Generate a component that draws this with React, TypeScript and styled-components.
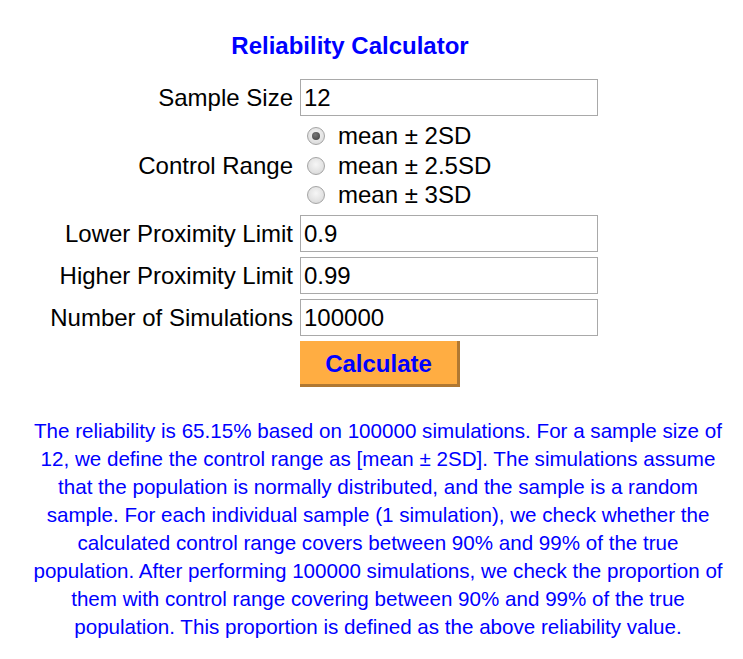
import React from "react";
import styled, { createGlobalStyle } from "styled-components";

const GlobalStyle = createGlobalStyle`
  body {
    margin: 0;
    background: #ffffff;
    font-family: "Liberation Sans", Arial, sans-serif;
    color: #000000;
  }
`;

const Page = styled.div`
  width: 743px;
  padding-top: 32px;
`;

const Title = styled.h1`
  width: 700px;
  margin: 0 0 19px 0;
  font-size: 24px;
  line-height: 28px;
  font-weight: bold;
  color: #0000ff;
  text-align: center;
`;

const Form = styled.div`
  display: grid;
  grid-template-columns: 293px 298px;
  column-gap: 7px;
  row-gap: 5px;
  align-items: center;
`;

const Label = styled.div`
  font-size: 24px;
  text-align: right;
  white-space: nowrap;
`;

const TextInput = styled.input`
  box-sizing: border-box;
  width: 298px;
  height: 37px;
  margin: 0;
  padding: 0 3px;
  border: 1px solid #a9a9a9;
  font-family: "Liberation Sans", Arial, sans-serif;
  font-size: 24px;
  color: #000000;
  outline: none;
`;

const RadioGroup = styled.div`
  display: flex;
  flex-direction: column;
`;

const RadioOption = styled.label`
  display: flex;
  align-items: center;
  height: 29.7px;
  padding-left: 7px;
  gap: 13px;
  font-size: 24px;
  white-space: nowrap;
`;

const Radio = styled.input`
  appearance: none;
  box-sizing: border-box;
  width: 18px;
  height: 18px;
  margin: 0;
  border-radius: 50%;
  border: 1px solid #a4a4a4;
  background: radial-gradient(circle at 50% 40%, #f6f6f6 0%, #e2e2e2 60%, #d0d0d0 100%);
  display: grid;
  place-items: center;

  &:checked::after {
    content: "";
    width: 8px;
    height: 8px;
    border-radius: 50%;
    background: radial-gradient(circle at 40% 35%, #777 0%, #3c3c3c 100%);
  }
`;

const Spacer = styled.div``;

const CalcButton = styled.button`
  box-sizing: border-box;
  width: 160px;
  height: 46px;
  margin: 0;
  padding: 2px 0 0 0;
  border: none;
  border-right: 3px solid #b07832;
  border-bottom: 3px solid #b07832;
  background: #ffad42;
  color: #0000ff;
  font-family: "Liberation Sans", Arial, sans-serif;
  font-size: 24px;
  font-weight: bold;
  cursor: pointer;
`;

const Result = styled.p`
  width: 700px;
  margin: 30px 0 0 28px;
  font-size: 20.6px;
  line-height: 28px;
  color: #0000ff;
  text-align: center;
`;

const ranges = ["mean ± 2SD", "mean ± 2.5SD", "mean ± 3SD"];

export default function App() {
  return (
    <Page>
      <GlobalStyle />
      <Title>Reliability Calculator</Title>
      <Form>
        <Label>Sample Size</Label>
        <TextInput defaultValue="12" />

        <Label>Control Range</Label>
        <RadioGroup>
          {ranges.map((r, i) => (
            <RadioOption key={r}>
              <Radio type="radio" name="range" defaultChecked={i === 0} />
              {r}
            </RadioOption>
          ))}
        </RadioGroup>

        <Label>Lower Proximity Limit</Label>
        <TextInput defaultValue="0.9" />

        <Label>Higher Proximity Limit</Label>
        <TextInput defaultValue="0.99" />

        <Label>Number of Simulations</Label>
        <TextInput defaultValue="100000" />

        <Spacer />
        <div>
          <CalcButton>Calculate</CalcButton>
        </div>
      </Form>
      <Result>
        The reliability is 65.15% based on 100000 simulations. For a sample size
        of 12, we define the control range as [mean ± 2SD]. The simulations
        assume that the population is normally distributed, and the sample is a
        random sample. For each individual sample (1 simulation), we check
        whether the calculated control range covers between 90% and 99% of the
        true population. After performing 100000 simulations, we check the
        proportion of them with control range covering between 90% and 99% of
        the true population. This proportion is defined as the above reliability
        value.
      </Result>
    </Page>
  );
}
